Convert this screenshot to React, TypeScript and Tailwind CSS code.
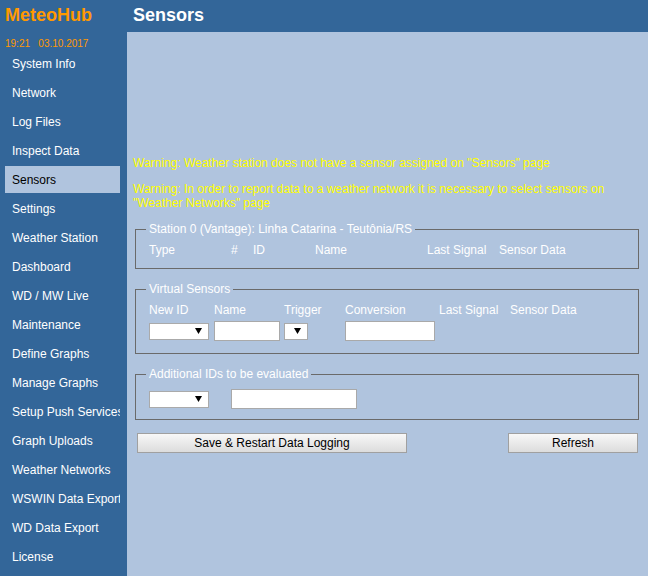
import React from "react";

const items = [
  "System Info",
  "Network",
  "Log Files",
  "Inspect Data",
  "Sensors",
  "Settings",
  "Weather Station",
  "Dashboard",
  "WD / MW Live",
  "Maintenance",
  "Define Graphs",
  "Manage Graphs",
  "Setup Push Services",
  "Graph Uploads",
  "Weather Networks",
  "WSWIN Data Export",
  "WD Data Export",
  "License",
];

function Select({ w }: { w: string }) {
  return (
    <div className={`${w} h-[17px] bg-white border border-[#aaaaaa] flex items-center justify-end pr-[6px]`}>
      <svg width="7" height="6" viewBox="0 0 7 6">
        <polygon points="0,0 7,0 3.5,6" fill="#000" />
      </svg>
    </div>
  );
}

function TextInput({ w }: { w: string }) {
  return <div className={`${w} h-[20px] bg-white border border-[#a9a9a9]`} />;
}

function Button({ w, label }: { w: string; label: string }) {
  return (
    <div
      className={`${w} h-[20px] border border-[#a0a0a0] bg-gradient-to-b from-[#f8f8f8] to-[#dcdcdc] flex items-center justify-center text-black text-[12px] leading-[14px]`}
    >
      {label}
    </div>
  );
}

export default function App() {
  return (
    <div className="flex min-h-screen w-full font-['Liberation_Sans',Arial,sans-serif] text-[12px] leading-[14px]">
      <aside className="w-[127px] shrink-0 bg-[#336699] pl-[5px] pr-[7px] pt-[4px]">
        <div className="text-[18px] leading-[22px] font-bold text-[#ff9900]">MeteoHub</div>
        <div className="mt-[12px] text-[10px] leading-[12px] text-[#ff9900] whitespace-nowrap">19:21&nbsp;&nbsp;&nbsp;03.10.2017</div>
        <nav className="flex flex-col gap-[2px]">
          {items.map((it) => (
            <div
              key={it}
              className={`h-[27px] pt-[7px] pl-[7px] whitespace-nowrap overflow-hidden ${
                it === "Sensors" ? "bg-[#b0c4de] text-black" : "text-white"
              }`}
            >
              {it}
            </div>
          ))}
        </nav>
      </aside>
      <main className="flex-1 flex flex-col">
        <header className="h-[32px] bg-[#336699] pl-[6px] pt-[4px] text-[18px] leading-[22px] font-bold text-white">
          Sensors
        </header>
        <section className="flex-1 bg-[#b0c4de] pl-[6px] pr-[7px] pt-[124px] text-white">
          <p className="text-[#ffff00]">Warning: Weather station does not have a sensor assigned on "Sensors" page</p>
          <p className="mt-[12px] text-[#ffff00]">
            Warning: In order to report data to a weather network it is necessary to select sensors on "Weather Networks" page
          </p>

          <fieldset className="mt-[12px] mx-[2px] border border-[#6a6a6a] px-[10px] pb-[11px]">
            <legend className="px-[3px]">Station 0 (Vantage): Linha Catarina - Teutônia/RS</legend>
            <div className="mt-[7px] pl-[3px] flex">
              <div className="w-[82px]">Type</div>
              <div className="w-[22px]">#</div>
              <div className="w-[62px]">ID</div>
              <div className="w-[112px]">Name</div>
              <div className="w-[72px]">Last Signal</div>
              <div>Sensor Data</div>
            </div>
          </fieldset>

          <fieldset className="mt-[13px] mx-[2px] border border-[#6a6a6a] px-[10px] pb-[12px]">
            <legend className="px-[3px]">Virtual Sensors</legend>
            <div className="mt-[7px] pl-[3px] flex">
              <div className="w-[65px]">New ID</div>
              <div className="w-[70px]">Name</div>
              <div className="w-[61px]">Trigger</div>
              <div className="w-[94px]">Conversion</div>
              <div className="w-[71px]">Last Signal</div>
              <div>Sensor Data</div>
            </div>
            <div className="mt-[4px] pl-[3px] flex items-center h-[20px]">
              <div className="w-[65px]">
                <Select w="w-[60px]" />
              </div>
              <div className="w-[70px]">
                <TextInput w="w-[66px]" />
              </div>
              <div className="w-[61px]">
                <Select w="w-[24px]" />
              </div>
              <div className="w-[94px]">
                <TextInput w="w-[90px]" />
              </div>
            </div>
          </fieldset>

          <fieldset className="mt-[13px] mx-[2px] border border-[#6a6a6a] px-[10px] pb-[10px]">
            <legend className="px-[3px]">Additional IDs to be evaluated</legend>
            <div className="mt-[8px] pl-[3px] flex items-center h-[20px] gap-[22px]">
              <Select w="w-[60px]" />
              <TextInput w="w-[126px]" />
            </div>
          </fieldset>

          <div className="mt-[13px] pl-[4px] pr-[3px] flex justify-between">
            <Button w="w-[270px]" label="Save & Restart Data Logging" />
            <Button w="w-[130px]" label="Refresh" />
          </div>
        </section>
      </main>
    </div>
  );
}
